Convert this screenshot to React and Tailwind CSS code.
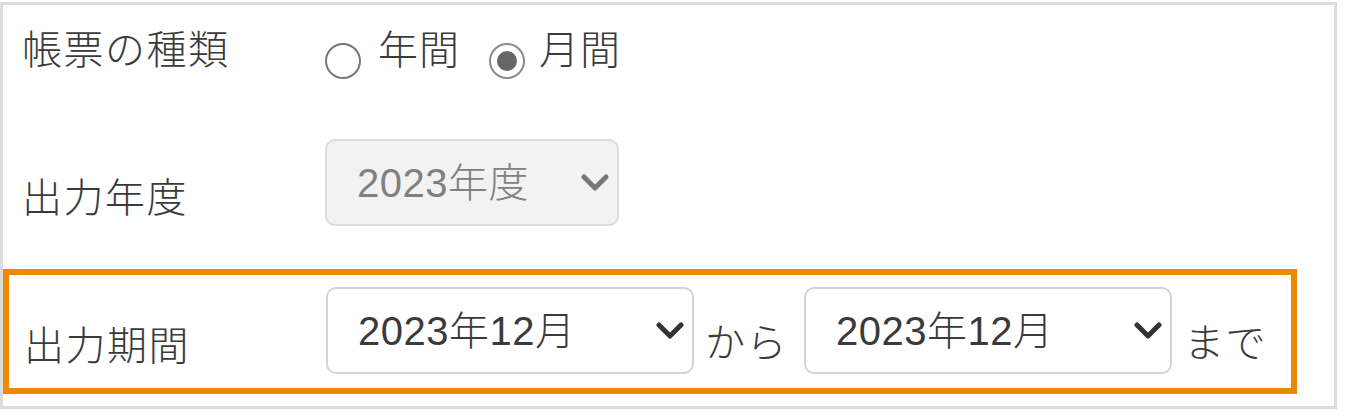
import { useState } from "react"

const FONT = { fontFamily: '"Liberation Sans", "Noto Sans CJK JP", sans-serif' }

const Chevron = ({ color }) => (
  <svg width="28" height="18" viewBox="0 0 28 18" className="pointer-events-none absolute right-[10px] top-1/2 -translate-y-1/2">
    <path d="M3 3 L14 14 L25 3" fill="none" stroke={color} strokeWidth="5" strokeLinecap="round" strokeLinejoin="round" />
  </svg>
)

const Select = ({ value, options, width, disabled, onChange }) => (
  <div className={`relative ${width} h-[87px]`}>
    <select
      value={value}
      disabled={disabled}
      onChange={e => onChange && onChange(e.target.value)}
      style={FONT}
      className={`w-full h-full appearance-none rounded-[10px] border-2 pl-[30px] pr-[50px] text-[40px] leading-[40px] font-light tracking-[0.5px] outline-none ${
        disabled
          ? "bg-[#f2f2f2] border-[#dcdcdc] text-[#808080]"
          : "bg-white border-[#d4d4d4] text-[#3a3a3a]"
      }`}
    >
      {options.map(o => (
        <option key={o} value={o}>{o}</option>
      ))}
    </select>
    <Chevron color={disabled ? "#777" : "#333"} />
  </div>
)

const Radio = ({ checked, label, onClick }) => (
  <button onClick={onClick} className="flex items-start">
    <span
      className={`mt-[13px] w-[36px] h-[36px] rounded-full border-[2.5px] flex items-center justify-center ${
        checked ? "border-[#8a8a8a]" : "border-[#777]"
      }`}
    >
      {checked && <span className="w-[20px] h-[20px] rounded-full bg-[#666]" />}
    </span>
    <span className="leading-[40px] text-[40px] font-light tracking-[1px] text-[#3a3a3a]">{label}</span>
  </button>
)

const months = ["2023年4月", "2023年5月", "2023年6月", "2023年7月", "2023年8月", "2023年9月", "2023年10月", "2023年11月", "2023年12月", "2024年1月", "2024年2月", "2024年3月"]

const label = "text-[40px] leading-[40px] font-light tracking-[1.5px] text-[#3a3a3a]"

export default function App() {
  const [kind, setKind] = useState("月間")
  const [from, setFrom] = useState("2023年12月")
  const [to, setTo] = useState("2023年12月")

  return (
    <div className="w-[1349px] h-[420px] bg-white pt-[2px]" style={FONT}>
      <div className="w-[1337px] h-[407px] border-[3px] border-[#dcdcdc] flex flex-col">

        {/* 帳票の種類 */}
        <div className="h-[134px] flex items-start pt-[25px]">
          <div className={`w-[322px] pl-[19px] ${label}`}>帳票の種類</div>
          <div className="flex items-start">
            <Radio checked={kind === "年間"} label={<span className="ml-[17px]">年間</span>} onClick={() => setKind("年間")} />
            <div className="w-[29px]" />
            <Radio checked={kind === "月間"} label={<span className="ml-[14px]">月間</span>} onClick={() => setKind("月間")} />
          </div>
        </div>

        {/* 出力年度 */}
        <div className="h-[130px] flex items-start">
          <div className={`w-[322px] pl-[19px] mt-[39px] ${label}`}>出力年度</div>
          <Select value="2023年度" options={["2023年度"]} width="w-[294px]" disabled />
        </div>

        {/* 出力期間 */}
        <div className="w-[1294px] h-[125px] border-[6px] border-[#ee8800] flex items-start">
          <div className={`w-[317px] pl-[15px] mt-[51px] ${label}`}>出力期間</div>
          <div className="mt-[12px] flex items-start">
            <Select value={from} options={months} width="w-[368px]" onChange={setFrom} />
            <span className={`ml-[11px] mr-[16px] mt-[36px] ${label}`}>から</span>
            <Select value={to} options={months} width="w-[368px]" onChange={setTo} />
            <span className={`ml-[12px] mt-[36px] ${label}`}>まで</span>
          </div>
        </div>
      </div>
    </div>
  )
}
